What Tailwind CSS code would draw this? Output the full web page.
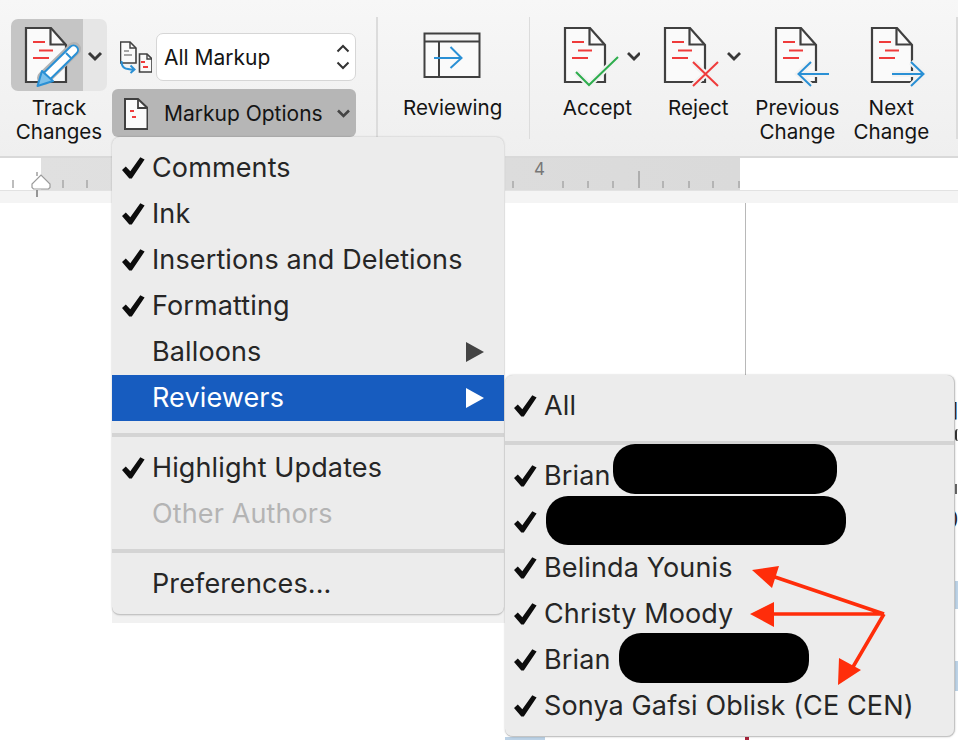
<!DOCTYPE html>
<html lang="en">
<head>
  <meta charset="UTF-8">
  <title>Track Changes - Reviewers</title>
  <script src="https://cdn.jsdelivr.net/npm/@tailwindcss/browser@4"></script>
</head>
<body class="bg-white">
  <svg width="0" height="0" class="absolute">
    <defs>
      <symbol id="doc" viewBox="0 0 44 57">
        <path d="M2 2H27L42 19V56H2Z" fill="#fafafa" stroke="#404040" stroke-width="2.2"/>
        <path d="M26.500 2V18.500H42" fill="none" stroke="#404040" stroke-width="2.200"/>
        <path d="M9 16H21M15 24.500H29M9 32H25" stroke="#ef3b3b" stroke-width="2"/>
      </symbol>
      <symbol id="check" viewBox="0 0 24 22">
        <path d="M1 13L4.800 9.500L9.300 14.200L19.300 0.300L23.600 2.600L10.800 21.500H8.300Z" fill="#0c0c0c"/>
      </symbol>
    </defs>
  </svg>

  <div class="relative w-[958px] h-[740px] overflow-hidden font-['Inter','Liberation_Sans',sans-serif]">
    <!-- Ribbon -->
    <div class="flex h-[158px] bg-gradient-to-b from-[#f7f7f7] to-[#efefef] border-b-2 border-[#d9d9d9] text-[#141414] text-[20.600px] leading-[24px]">
      <!-- Track Changes -->
      <div class="ml-[11px] w-[96px] pt-[19px] flex flex-col items-center">
        <div class="flex w-[96px] h-[72px] rounded-[7px] overflow-hidden">
          <div class="w-[72px] bg-[#c5c5c5]"></div>
          <div class="w-[24px] bg-[#e6e6e6]"></div>
        </div>
        <div class="mt-[5px] text-center">Track<br>Changes</div>
      </div>
      <!-- Markup selectors -->
      <div class="ml-[5px] w-[244px] pt-[33px] flex flex-col gap-[8px] text-[21px]">
        <div class="flex items-center h-[48px] pl-[8px] gap-[4px]">
          <svg width="32" height="34" viewBox="120 40 32 34">
            <path d="M120.500 42H130L136 48V63H120.500Z" fill="#fafafa" stroke="#404040" stroke-width="1.600"/>
            <path d="M130 42V48H136" fill="none" stroke="#404040" stroke-width="1.400"/>
            <path d="M124 51H129M124 55H132" stroke="#8a8a8a" stroke-width="1.600"/>
            <path d="M139.500 54H147L152 59V72H139.500Z" fill="#fafafa" stroke="#404040" stroke-width="1.600"/>
            <path d="M147 54V59H152" fill="none" stroke="#404040" stroke-width="1.400"/>
            <path d="M141 62H145M143 67H148" stroke="#ef3b3b" stroke-width="1.800"/>
            <path d="M121.500 61C121.500 68 125 69.500 134 69.500M130.500 65.500L134.500 69.500L130.500 73" fill="none" stroke="#2a90d5" stroke-width="2"/>
          </svg>
          <div class="flex items-center justify-between w-[200px] h-[48px] pl-[7px] pr-[5px] bg-white border border-[#d6d6d6] rounded-[7px]">
            <span class="pt-[1px]">All Markup</span>
            <svg width="14" height="26" viewBox="0 0 14 26" fill="none" stroke="#333" stroke-width="2"><path d="M1.500 7.500L7 2L12.500 7.500M1.500 18.500L7 24L12.500 18.500"/></svg>
          </div>
        </div>
        <div class="flex items-center h-[48px] pl-[12px] pr-[6px] bg-[#b6b6b6] rounded-[6px]">
          <svg width="24" height="33" viewBox="124 96 24 33">
            <path d="M125 98H138L147.500 107V128H125Z" fill="#fafafa" stroke="#404040" stroke-width="2"/>
            <path d="M138 98V107H147.500" fill="none" stroke="#404040" stroke-width="1.800"/>
            <path d="M130 110H134M132 116H136" stroke="#ef3b3b" stroke-width="2"/>
          </svg>
          <span class="ml-[16px] pt-[1px] flex-1">Markup Options</span>
          <svg width="13" height="9" viewBox="0 0 13 9" fill="none" stroke="#444" stroke-width="2.600"><path d="M1 1.500L6.500 7L12 1.500"/></svg>
        </div>
      </div>
      <div class="ml-[20px] mt-[17px] w-[2px] h-[122px] bg-[#dcdcdc]"></div>
      <!-- Reviewing -->
      <div class="ml-[24px] w-[102px] pt-[19px] flex flex-col items-center">
        <svg width="102" height="72" viewBox="402 19 102 72" fill="none">
          <rect x="425" y="42" width="54" height="35" fill="#fafafa"/>
          <path d="M424.500 33.500H479.500V77H424.500ZM424.500 41.500H479.500M439 41.500V77" stroke="#404040" stroke-width="2"/>
          <path d="M434 58H461M450.500 47L461.500 58L450.500 68" stroke="#2a90d5" stroke-width="2"/>
        </svg>
        <div class="mt-[5px]">Reviewing</div>
      </div>
      <div class="ml-[25px] mt-[17px] w-[2px] h-[122px] bg-[#dcdcdc]"></div>
      <!-- Accept -->
      <div class="ml-[24px] w-[86px] pt-[19px] flex flex-col items-center">
        <svg width="86" height="72" viewBox="554 19 86 72" fill="none">
          <use href="#doc" x="563" y="26" width="44" height="57"/>
          <path d="M576 72L589 85L618 57" stroke="#f2f2f2" stroke-width="6"/>
          <path d="M576 72L589 85L618 57" stroke="#2fae4e" stroke-width="2"/>
          <path d="M628 53L634 59L640 53" stroke="#383838" stroke-width="2.800"/>
        </svg>
        <div class="mt-[5px]">Accept</div>
      </div>
      <!-- Reject -->
      <div class="ml-[15px] w-[86px] pt-[19px] flex flex-col items-center">
        <svg width="86" height="72" viewBox="655 19 86 72" fill="none">
          <use href="#doc" x="663" y="26" width="44" height="57"/>
          <path d="M693 62L718 86M718 62L693 86" stroke="#f2f2f2" stroke-width="6"/>
          <path d="M693 62L718 86M718 62L693 86" stroke="#ef3b3b" stroke-width="2"/>
          <path d="M728 53L734 59L740 53" stroke="#383838" stroke-width="2.800"/>
        </svg>
        <div class="mt-[5px]">Reject</div>
      </div>
      <!-- Previous Change -->
      <div class="ml-[13px] w-[86px] pt-[19px] flex flex-col items-center">
        <svg width="86" height="72" viewBox="753 19 86 72" fill="none">
          <use href="#doc" x="773" y="26" width="44" height="57"/>
          <path d="M797 74H828M810 62L797.500 74L810 86" stroke="#f2f2f2" stroke-width="6"/>
          <path d="M797 74H828M810 62L797.500 74L810 86" stroke="#2a90d5" stroke-width="2"/>
        </svg>
        <div class="mt-[5px] text-center">Previous<br>Change</div>
      </div>
      <!-- Next Change -->
      <div class="ml-[8px] w-[86px] pt-[19px] flex flex-col items-center">
        <svg width="86" height="72" viewBox="847 19 86 72" fill="none">
          <use href="#doc" x="869" y="26" width="44" height="57"/>
          <path d="M891 74H922M910 62L922.500 74L910 86" stroke="#f2f2f2" stroke-width="6"/>
          <path d="M891 74H922M910 62L922.500 74L910 86" stroke="#2a90d5" stroke-width="2"/>
        </svg>
        <div class="mt-[5px] text-center">Next<br>Change</div>
      </div>
      <div class="ml-[22px] mt-[17px] w-[2px] h-[122px] bg-[#dcdcdc]"></div>
    </div>

    <!-- Ruler -->
    <div class="flex h-[32px] bg-white">
      <div class="w-[41px]"></div>
      <div class="w-[699px] bg-gradient-to-r from-[#e0e0e0] to-[#dadada]"></div>
      <div class="flex-1"></div>
    </div>
    <div class="h-[13px] bg-[#f4f4f4] border-t border-[#e2e2e2]"></div>

    <!-- Ruler ticks and number -->
    <svg class="absolute left-0 top-[158px]" width="958" height="46" viewBox="0 158 958 46" fill="none">
      <path d="M13 180V188M63 180V188M87 180V188M513 181V188M563 181V188M588 181V188M613 181V188M663 181V188M689 181V188M713 181V188M739 181V188" stroke="#a8a8a8" stroke-width="1.500"/>
      <path d="M639 171V188M37 172V176" stroke="#a0a0a0" stroke-width="1.500"/>
      <path d="M37 190V197" stroke="#777" stroke-width="1.500"/>
      <path d="M32 187.500V184L41 175L50 184V187.500L48.500 189H33.500Z" fill="#fff" stroke="#9a9a9a" stroke-width="1.200"/>
    </svg>
    <span class="absolute left-[534px] top-[159px] text-[17px] leading-[20px] text-[#777]">4</span>

    <!-- Document bits around the menus -->
    <div class="absolute left-[745px] top-[203px] w-[1px] h-[175px] bg-[#b8b8b8]"></div>
    <div class="absolute left-[954px] top-[581px] w-[4px] h-[28px] bg-[#bcd2e6]"></div>
    <div class="absolute left-[954px] top-[661px] w-[4px] h-[30px] bg-[#bcd2e6]"></div>
    <div class="absolute left-[505px] top-[737px] w-[40px] h-[3px] bg-[#bcd2e6]"></div>
    <div class="absolute left-[745px] top-[737px] w-[4px] h-[3px] bg-[#a8243a]"></div>
    <span class="absolute left-[948px] top-[397px] w-[10px] text-right font-['Liberation_Serif',serif] text-[20px] leading-[24px] text-[#222]">]</span>
    <div class="absolute left-[955px] top-[429px] w-[3px] h-[12px] rounded-l-full border-l-2 border-[#333]"></div>
    <div class="absolute left-[955px] top-[484px] w-[2px] h-[10px] bg-[#666]"></div>
    <span class="absolute left-[948px] top-[505px] w-[10px] text-right font-['Liberation_Serif',serif] text-[20px] leading-[24px] text-[#222]">)</span>

    <!-- Markup Options menu -->
    <div class="absolute left-[112px] top-[137px] w-[393px] h-[486px] bg-[#f1f1f1]">
      <div class="w-[392px] h-[478px] py-[8px] bg-[#ececec] rounded-[8px] border-b border-[#c4c4c4] shadow-[0_0_2px_rgba(0,0,0,0.25)] text-[27px] tracking-[0.12px] leading-[46px] text-[#262626]">
        <div class="flex items-center h-[46px] px-[9px]">
          <svg class="w-[24px] h-[22px]"><use href="#check"/></svg>
          <span class="ml-[7px]">Comments</span>
        </div>
        <div class="flex items-center h-[46px] px-[9px]">
          <svg class="w-[24px] h-[22px]"><use href="#check"/></svg>
          <span class="ml-[7px]">Ink</span>
        </div>
        <div class="flex items-center h-[46px] px-[9px]">
          <svg class="w-[24px] h-[22px]"><use href="#check"/></svg>
          <span class="ml-[7px]">Insertions and Deletions</span>
        </div>
        <div class="flex items-center h-[46px] px-[9px]">
          <svg class="w-[24px] h-[22px]"><use href="#check"/></svg>
          <span class="ml-[7px]">Formatting</span>
        </div>
        <div class="flex items-center justify-between h-[46px] pl-[40px] pr-[20px]">
          <span>Balloons</span>
          <svg width="18" height="20" viewBox="0 0 18 20"><path d="M0 0L18 10L0 20Z" fill="#444"/></svg>
        </div>
        <div class="flex items-center justify-between h-[46px] pl-[40px] pr-[20px] bg-[#175cbf] text-white">
          <span>Reviewers</span>
          <svg width="18" height="20" viewBox="0 0 18 20"><path d="M0 0L18 10L0 20Z" fill="#fff"/></svg>
        </div>
        <div class="h-[4px] mt-[12px] mb-[8px] bg-[#d4d4d4]"></div>
        <div class="flex items-center h-[46px] px-[9px]">
          <svg class="w-[24px] h-[22px]"><use href="#check"/></svg>
          <span class="ml-[7px]">Highlight Updates</span>
        </div>
        <div class="flex items-center h-[46px] pl-[40px] text-[#b4b4b4]">Other Authors</div>
        <div class="h-[4px] mt-[12px] mb-[8px] bg-[#d4d4d4]"></div>
        <div class="flex items-center h-[46px] pl-[40px]">Preferences...</div>
      </div>
    </div>

    <!-- Reviewers submenu -->
    <div class="absolute left-[505px] top-[375px] w-[450px] h-[362px] py-[8px] bg-[#ececec] rounded-[8px] border-r border-b border-[#c4c4c4] shadow-[0_0_2px_rgba(0,0,0,0.25)] text-[27px] tracking-[0.12px] leading-[46px] text-[#262626]">
      <div class="flex items-center h-[46px] px-[8px]">
        <svg class="w-[24px] h-[22px]"><use href="#check"/></svg>
        <span class="ml-[7px]">All</span>
      </div>
      <div class="h-[4px] mt-[12px] mb-[8px] bg-[#d4d4d4]"></div>
      <div class="flex items-center h-[46px] px-[8px]">
        <svg class="w-[24px] h-[22px]"><use href="#check"/></svg>
        <span class="ml-[7px]">Brian</span>
      </div>
      <div class="flex items-center h-[46px] px-[8px]">
        <svg class="w-[24px] h-[22px]"><use href="#check"/></svg>
      </div>
      <div class="flex items-center h-[46px] px-[8px]">
        <svg class="w-[24px] h-[22px]"><use href="#check"/></svg>
        <span class="ml-[7px]">Belinda Younis</span>
      </div>
      <div class="flex items-center h-[46px] px-[8px]">
        <svg class="w-[24px] h-[22px]"><use href="#check"/></svg>
        <span class="ml-[7px]">Christy Moody</span>
      </div>
      <div class="flex items-center h-[46px] px-[8px]">
        <svg class="w-[24px] h-[22px]"><use href="#check"/></svg>
        <span class="ml-[7px]">Brian</span>
      </div>
      <div class="flex items-center h-[46px] px-[8px]">
        <svg class="w-[24px] h-[22px]"><use href="#check"/></svg>
        <span class="ml-[7px]">Sonya Gafsi Oblisk (CE CEN)</span>
      </div>
    </div>

    <!-- Redactions -->
    <div class="absolute left-[613px] top-[444px] w-[224px] h-[50px] rounded-[22px] bg-black"></div>
    <div class="absolute left-[546px] top-[496px] w-[300px] h-[49px] rounded-[22px] bg-black"></div>
    <div class="absolute left-[619px] top-[633px] w-[190px] h-[50px] rounded-[22px] bg-black"></div>

    <!-- Red annotation arrows -->
    <svg class="absolute left-[740px] top-[555px]" width="150" height="140" viewBox="740 555 150 140">
      <path d="M884 614L772 576M884 614H772M884 614L850 672" fill="none" stroke="#ff2d0a" stroke-width="3.500"/>
      <path d="M752 570L779 566L772 588ZM750 614L774 602V627ZM838 685L839 658L861 670Z" fill="#ff2d0a"/>
    </svg>

    <!-- Track Changes icon, over its button -->
    <svg class="absolute left-[11px] top-[19px]" width="96" height="72" viewBox="11 19 96 72" fill="none">
      <use href="#doc" x="24" y="26" width="44" height="57"/>
      <path d="M44 78L74 49" stroke="#b3b3b3" stroke-width="14" stroke-linecap="round"/>
      <path d="M45 78L73.500 50" stroke="#2a90d5" stroke-width="11" stroke-linecap="round"/>
      <path d="M45 78L73.500 50" stroke="#fff" stroke-width="7" stroke-linecap="round"/>
      <path d="M66 53L71 58" stroke="#2a90d5" stroke-width="2"/>
      <path d="M37.500 86L42 71L53 81Z" fill="#7cc0ea" stroke="#2a90d5" stroke-width="2" stroke-linejoin="round"/>
      <path d="M89 53L95 59L101 53" stroke="#383838" stroke-width="3"/>
    </svg>
  </div>
</body>
</html>
